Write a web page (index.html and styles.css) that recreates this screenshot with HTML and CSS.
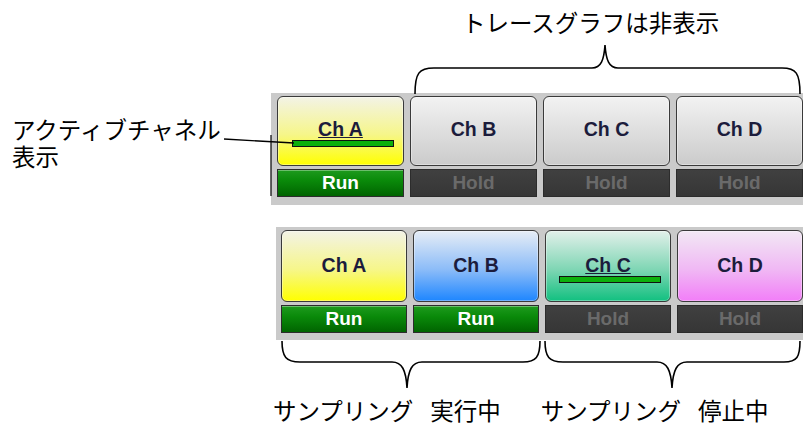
FILE: index.html
```html
<!DOCTYPE html>
<html lang="ja">
  <head>
    <meta charset="UTF-8" />
    <title>チャネル表示</title>
    <link rel="stylesheet" href="styles.css">
  </head>
  <body>
    <div class="figure">
      <div class="caption-top">トレースグラフは非表示</div>

      <div class="panel panel-top">
        <div class="cell">
          <div class="btn yellow active"><span class="name">Ch A</span><span class="bar"></span></div>
          <div class="status run">Run</div>
        </div>
        <div class="cell">
          <div class="btn grey"><span class="name">Ch B</span></div>
          <div class="status hold">Hold</div>
        </div>
        <div class="cell">
          <div class="btn grey"><span class="name">Ch C</span></div>
          <div class="status hold">Hold</div>
        </div>
        <div class="cell">
          <div class="btn grey"><span class="name">Ch D</span></div>
          <div class="status hold">Hold</div>
        </div>
      </div>

      <div class="panel panel-bottom">
        <div class="cell">
          <div class="btn yellow"><span class="name">Ch A</span></div>
          <div class="status run">Run</div>
        </div>
        <div class="cell">
          <div class="btn blue"><span class="name">Ch B</span></div>
          <div class="status run">Run</div>
        </div>
        <div class="cell">
          <div class="btn green active"><span class="name">Ch C</span><span class="bar"></span></div>
          <div class="status hold">Hold</div>
        </div>
        <div class="cell">
          <div class="btn pink"><span class="name">Ch D</span></div>
          <div class="status hold">Hold</div>
        </div>
      </div>

      <div class="captions-bottom">
        <div class="cap cap-run">サンプリング<span class="gap">実行中</span></div>
        <div class="cap cap-hold">サンプリング<span class="gap">停止中</span></div>
      </div>

      <!-- callout label -->
      <div class="note">
        <div>アクティブチャネル</div>
        <div>表示</div>
      </div>

      <!-- braces and leader line -->
      <svg class="marks" width="803" height="431" viewBox="0 0 803 431">
        <g fill="none" stroke="#000" stroke-width="1.6">
          <path d="M415,94 C415,73 419,68 434,68 L592,68 C601,68 604,60 605,45 C606,60 609,68 618,68 L782,68 C796,68 800,73 800,94" />
          <path d="M282,341 C282,357 286,362 300,362 L392,362 C402,362 406,370 407,388 C408,370 412,362 422,362 L523,362 C536,362 540,357 540,341" />
          <path d="M545,341 C545,357 549,362 563,362 L657,362 C667,362 671,370 672,388 C673,370 677,362 687,362 L784,362 C797,362 800,357 800,341" />
          <path d="M224,139 L294,143" stroke-width="1.4" />
          <path d="M271,135 L271,196" stroke-width="1.2" />
        </g>
      </svg>
    </div>
  </body>
</html>
```

FILE: styles.css
```css
/* General Styles */
body {
  margin: 0;
  background-color: #fff;
  font-family: "Noto Sans CJK JP", sans-serif;
  color: #000;
}

.figure {
  position: relative;
  width: 803px;
  height: 431px;
  overflow: hidden;
}

.caption-top {
  padding: 8px 0 0 462px;
  font-size: 23.5px;
  line-height: 28px;
}

/* Channel panels */
.panel {
  display: grid;
  grid-template-columns: repeat(4, 127px);
  column-gap: 6px;
  background-color: #cacaca;
  box-sizing: border-box;
}

.panel-top {
  margin: 57px 0 0 271px;
  width: 540px;
  height: 112px;
  padding: 3px 0 0 6px;
}

.panel-bottom {
  margin: 22px 0 0 276px;
  width: 540px;
  height: 113px;
  padding: 3px 0 0 5px;
  grid-template-columns: repeat(4, 126px);
}

.cell {
  display: flex;
  flex-direction: column;
  gap: 3px;
}

.btn {
  height: 70px;
  box-sizing: border-box;
  border: 1.5px solid #3a3a3a;
  border-radius: 6px;
  display: flex;
  flex-direction: column;
  align-items: center;
  padding-top: 22px;
  box-shadow: inset 0 0 0 1px rgba(255, 255, 255, 0.35);
}

.panel-bottom .btn {
  height: 72px;
  padding-top: 24px;
}

.name {
  font-family: "Liberation Sans", Arial, sans-serif;
  font-weight: bold;
  font-size: 19.5px;
  line-height: 20px;
  color: #1c1c3c;
}

.active .name {
  text-decoration: underline;
  text-decoration-thickness: 1px;
  text-underline-offset: 1px;
}

.bar {
  display: block;
  width: 100px;
  height: 5px;
  margin: 1px 0 0 4px;
  background-color: #0cb00c;
  border: 1px solid #111;
}

.grey {
  background: linear-gradient(#f2f2f2, #cbcbcb);
}

.yellow {
  background: linear-gradient(#f3f3e6, #f6f68a 55%, #ffff00);
}

.blue {
  background: linear-gradient(#e6edf6, #8cbcf8 55%, #1e86ff);
}

.green {
  background: linear-gradient(#e2f0ea, #7fd6b4 55%, #12c080);
}

.pink {
  background: linear-gradient(#f2e8f4, #f0b8f4 55%, #f27ef8);
}

/* Status bars */
.status {
  height: 28px;
  box-sizing: border-box;
  border: 1.5px solid #2c2c2c;
  font-family: "Liberation Sans", Arial, sans-serif;
  font-weight: bold;
  font-size: 19px;
  line-height: 25px;
  text-align: center;
}

.run {
  color: #fff;
  background: linear-gradient(#1e9a1e, #0a8a0a 40%, #006400);
  box-shadow: inset 0 1px 0 rgba(255, 255, 255, 0.35);
}

.hold {
  color: #6a6a6a;
  background: linear-gradient(#404040, #363636);
}

/* Annotations */
.captions-bottom {
  display: flex;
  margin-top: 55px;
  padding-left: 273px;
  font-size: 23.5px;
  line-height: 30px;
}

.cap-hold {
  margin-left: 40px;
}

.gap {
  margin-left: 17px;
}

.note {
  position: absolute;
  left: 12px;
  top: 116px;
  font-size: 23.5px;
  line-height: 27px;
}

.marks {
  position: absolute;
  left: 0;
  top: 0;
  pointer-events: none;
}
```
